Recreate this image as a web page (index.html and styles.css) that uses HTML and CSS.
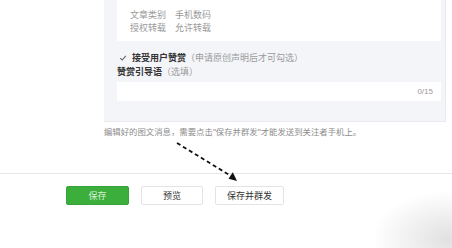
FILE: index.html
```html
<!DOCTYPE html>
<html lang="zh">
<head>
<meta charset="utf-8">
<link rel="stylesheet" href="styles.css">
</head>
<body>
<div class="page">
  <div class="panel">
    <div class="info">
      <div class="info-row"><span class="k">文章类别</span><span class="v">手机数码</span></div>
      <div class="info-row"><span class="k">授权转载</span><span class="v">允许转载</span></div>
    </div>
    <div class="reward">
      <span class="check"><svg width="8" height="8" viewBox="0 0 8 8"><path d="M1.2 4.2 L3.2 6 L6.8 1.8" fill="none" stroke="#666" stroke-width="1.1"/></svg></span>
      <span class="strong">接受用户赞赏</span><span class="hint">（申请原创声明后才可勾选）</span>
    </div>
    <div class="label"><span class="strong">赞赏引导语</span><span class="hint">（选填）</span></div>
    <div class="input"><span class="count">0/15</span></div>
  </div>
  <div class="caption">编辑好的图文消息，需要点击<span class="q">"</span>保存并群发<span class="q">"</span>才能发送到关注者手机上。</div>
  <div class="spacer"></div>
  <div class="toolbar">
    <button class="btn btn-primary">保存</button>
    <button class="btn btn-preview">预览</button>
    <button class="btn btn-send">保存并群发</button>
  </div>
  <svg class="arrow" width="452" height="248" viewBox="0 0 452 248">
    <path d="M177 143 L231 176" stroke="#111" stroke-width="1.8" stroke-dasharray="4 3" fill="none"/>
    <path d="M237 181 L228.5 178.8 L232.8 172.2 Z" fill="#111"/>
  </svg>
  <div class="glow"></div>
</div>
</body>
</html>
```
FILE: styles.css
```css
* { box-sizing: border-box; }
html, body { margin: 0; padding: 0; background: #fff; }
body {
  font-family: "Noto Sans CJK SC", "Noto Sans", sans-serif;
  font-size: 9px;
  color: #333;
  width: 452px;
  height: 248px;
  overflow: hidden;
}
.page { position: relative; width: 452px; height: 248px; overflow: hidden; }
.panel {
  margin-left: 104px;
  width: 342px;
  height: 122px;
  background: #f4f5f9;
  border-right: 1px solid #e9eaee;
  border-bottom: 1px solid #e9eaee;
  padding: 0 0 0 13px;
}
.info {
  width: 324px;
  height: 41px;
  background: #fff;
  padding: 8px 0 0 13px;
}
.info-row { display: flex; line-height: 13px; height: 13px; color: #9a9a9a; }
.info-row .k { width: 45px; }
.reward {
  margin-top: 10px;
  height: 14px;
  line-height: 14px;
  display: flex;
  align-items: center;
}
.check {
  width: 9px; height: 9px;
  margin: 0 5px 0 1px;
  display: flex; align-items: center; justify-content: center;
}
.strong { font-weight: bold; color: #333; }
.hint { color: #9a9a9a; }
.label { height: 14px; line-height: 14px; }
.input {
  margin-top: 3px;
  width: 324px;
  height: 19px;
  background: #fff;
  display: flex;
  justify-content: flex-end;
  align-items: center;
  padding-right: 8px;
}
.count { color: #999; font-size: 8px; font-family: "Liberation Sans", sans-serif; }
.caption {
  margin: 3px 0 0 104px;
  height: 12px;
  line-height: 12px;
  font-size: 8.4px;
  color: #8c8c8c;
  white-space: nowrap;
}
.q { font-family: "Liberation Sans", sans-serif; }
.spacer { height: 37px; border-bottom: 1px solid #e6e6e6; }
.toolbar {
  display: flex;
  gap: 12px;
  padding: 12px 0 0 66px;
}
.btn {
  height: 19px;
  font-family: "Noto Sans CJK SC", sans-serif;
  font-size: 9px;
  border: 1px solid #e4e4e4;
  background: #fff;
  color: #333;
  border-radius: 2px;
  padding: 0;
  line-height: 17px;
}
.btn-primary { width: 63px; background: #3bae3c; border-color: #36a338; color: #d8f0d8; }
.btn-preview { width: 62px; }
.btn-send { width: 69px; }
.arrow { position: absolute; left: 0; top: 0; pointer-events: none; }
.glow {
  position: absolute;
  left: 372px; top: 190px;
  width: 80px; height: 58px;
  background: radial-gradient(ellipse at 95% 85%, rgba(200,200,200,0.55), rgba(230,230,230,0) 70%);
  pointer-events: none;
}
```
